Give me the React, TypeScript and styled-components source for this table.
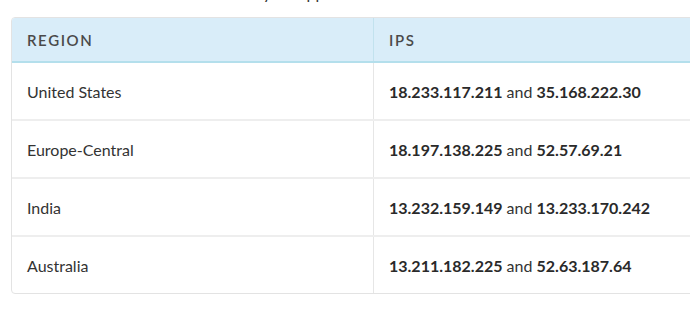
import styled, { createGlobalStyle } from "styled-components";

const GlobalStyle = createGlobalStyle`
  html, body {
    margin: 0;
    padding: 0;
    overflow: hidden;
    background: #ffffff;
  }
`;

const Page = styled.div`
  width: 690px;
  height: 317px;
  overflow: hidden;
  padding-left: 11px;
  box-sizing: border-box;
  font-family: Lato, "Liberation Sans", sans-serif;
  color: #333333;
`;

// the sentence above the table is scrolled mostly out of view
const Intro = styled.p`
  margin: -17px 0 14px 0;
  height: 20px;
  line-height: 20px;
  font-size: 16px;
  white-space: nowrap;
  color: #333333;
`;

const TableFrame = styled.div`
  width: 740px;
  border: 1px solid #e3e3e3;
  border-radius: 4px;
  overflow: hidden;
`;

const Table = styled.table`
  width: 100%;
  border-collapse: collapse;
  table-layout: fixed;
`;

const HeadCell = styled.th<{ $width?: number }>`
  width: ${(p) => (p.$width ? `${p.$width}px` : "auto")};
  background: #d9edf9;
  border-bottom: 2px solid #b4dfec;
  border-right: 1px solid #c2e2ee;
  height: 43px;
  padding: 0 15px;
  text-align: left;
  font-size: 15px;
  font-weight: 600;
  letter-spacing: 1.6px;
  color: #4a4a4a;
  &:last-child {
    border-right: none;
  }
`;

const Row = styled.tr`
  & + & td {
    border-top: 2px solid #eeeeee;
  }
`;

const Cell = styled.td`
  height: 56px;
  padding: 0 15px;
  font-size: 16px;
  color: #333333;
  border-right: 1px solid #e6e6e6;
  &:last-child {
    border-right: none;
  }
`;

const Ip = styled.span`
  font-weight: 700;
  color: #2a2a2a;
`;

const rows = [
  { region: "United States", ips: ["18.233.117.211", "35.168.222.30"] },
  { region: "Europe-Central", ips: ["18.197.138.225", "52.57.69.21"] },
  { region: "India", ips: ["13.232.159.149", "13.233.170.242"] },
  { region: "Australia", ips: ["13.211.182.225", "52.63.187.64"] },
];

export default function App() {
  return (
    <>
      <GlobalStyle />
      <Page>
        <Intro>Allow traffic from these IPs listed in your application.</Intro>
        <TableFrame>
          <Table>
            <thead>
              <tr>
                <HeadCell $width={331}>REGION</HeadCell>
                <HeadCell>IPS</HeadCell>
              </tr>
            </thead>
            <tbody>
              {rows.map((r) => (
                <Row key={r.region}>
                  <Cell>{r.region}</Cell>
                  <Cell>
                    <Ip>{r.ips[0]}</Ip> and <Ip>{r.ips[1]}</Ip>
                  </Cell>
                </Row>
              ))}
            </tbody>
          </Table>
        </TableFrame>
      </Page>
    </>
  );
}
